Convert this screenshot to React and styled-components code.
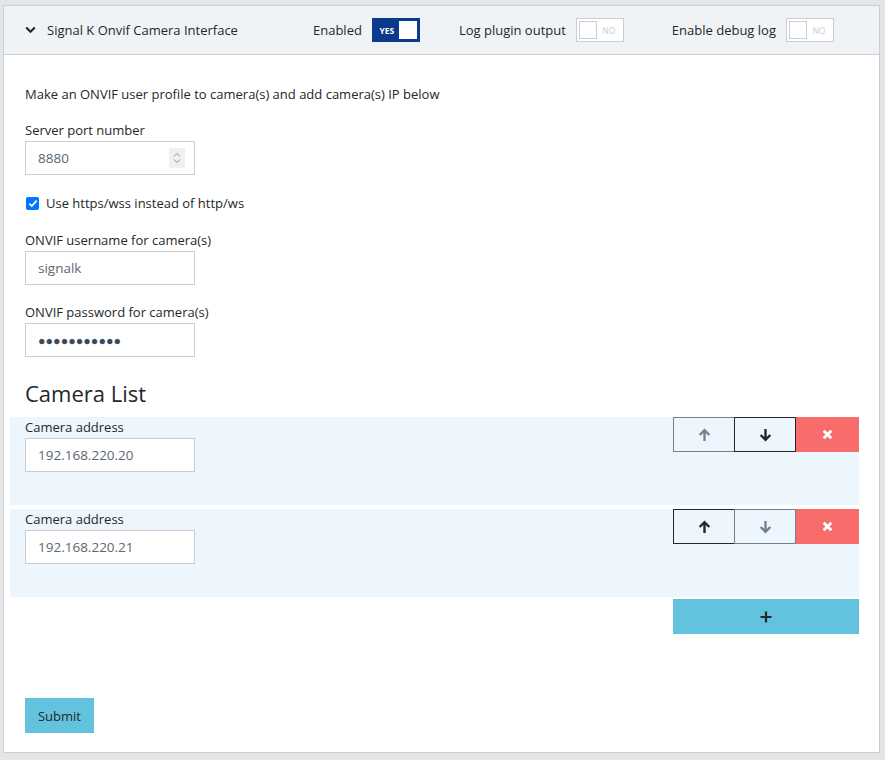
import React from "react";
import styled, { createGlobalStyle } from "styled-components";

const GlobalStyle = createGlobalStyle`
  body {
    margin: 0;
    background: #e4e5e6;
    font-family: "Open Sans", "Noto Sans", sans-serif;
    font-size: 13px;
    color: #23282c;
  }
  * { box-sizing: border-box; }
`;

const Page = styled.div`
  padding: 5px 5px 7px 3px;
`;

const Card = styled.div`
  background: #fff;
  border: 1px solid #c8ced3;
  height: 748px;
  display: flex;
  flex-direction: column;
`;

const Header = styled.div`
  flex-shrink: 0;
  background: #f0f3f5;
  border-bottom: 1px solid #c8ced3;
  height: 49px;
  display: flex;
  align-items: center;
  padding-left: 21px;
  font-size: 13px;
`;

const Title = styled.div`
  display: flex;
  align-items: center;
  gap: 11px;
  width: 288px;
`;

const ToggleGroup = styled.div`
  display: flex;
  align-items: center;
  gap: 10px;
  margin-right: ${(p) => p.$gap}px;
`;

const Switch = styled.div`
  width: 48px;
  height: 24px;
  border: 1px solid ${(p) => (p.$on ? "#0b3a8c" : "#c8ced3")};
  background: ${(p) => (p.$on ? "#0b3a8c" : "#fff")};
  display: flex;
  flex-direction: ${(p) => (p.$on ? "row" : "row-reverse")};
  align-items: center;
  justify-content: space-between;
  padding: 2px;
`;

const SwitchText = styled.span`
  flex: 1;
  text-align: center;
  font-size: 8.5px;
  font-weight: ${(p) => (p.$on ? 700 : 400)};
  color: ${(p) => (p.$on ? "#fff" : "#c8ced3")};
`;

const Knob = styled.span`
  width: 18px;
  height: 18px;
  background: #fff;
  border: 1px solid ${(p) => (p.$on ? "#fff" : "#c8ced3")};
`;

const Body = styled.div`
  padding: 30px 20px 10px 21px;
  display: flex;
  flex-direction: column;
  flex: 1;
  min-height: 0;
`;

const Intro = styled.p`
  margin: 0 0 18px 0;
`;

const Field = styled.div`
  display: flex;
  flex-direction: column;
  gap: 2px;
  margin-bottom: ${(p) => p.$mb ?? 18}px;
`;

const Label = styled.label`
  font-size: 13px;
  line-height: 18px;
`;

const InputBox = styled.div`
  width: 170px;
  height: 34px;
  border: 1px solid #c8ced3;
  background: #fff;
  display: flex;
  align-items: center;
  justify-content: space-between;
  padding: 0 12px;
  color: #5c6873;
  font-size: 13.5px;
`;

const Spinner = styled.span`
  width: 16px;
  height: 20px;
  background: #f0f0f0;
  display: flex;
  align-items: center;
  justify-content: center;
  margin-right: -3px;
`;

const Dots = styled.span`
  color: #3b4a5a;
  font-size: 12.5px;
  letter-spacing: 0;
`;

const CheckRow = styled.label`
  display: flex;
  align-items: center;
  gap: 7px;
  height: 18px;
  margin-top: 19px;
  margin-bottom: 19px;
`;

const Check = styled.span`
  width: 13px;
  height: 13px;
  border-radius: 2px;
  background: #0075ff;
  display: flex;
  align-items: center;
  justify-content: center;
  margin-left: 1px;
`;

const Heading = styled.h3`
  font-size: 22px;
  font-weight: 400;
  margin: 21px 0 9px 0;
  line-height: 30px;
`;

const List = styled.div`
  display: flex;
  flex-direction: column;
  gap: 4px;
  margin: 0 0 0 -15px;
  width: 849px;
`;

const Item = styled.div`
  background: #eef6fd;
  height: 88px;
  display: flex;
  justify-content: space-between;
  padding: 1px 0 0 15px;
`;

const Buttons = styled.div`
  display: flex;
  height: 35px;
  margin-top: -1px;
`;

const MoveButton = styled.button`
  width: 62px;
  height: 35px;
  background: transparent;
  border: 1px solid ${(p) => (p.$active ? "#23282c" : "#73818f")};
  margin-left: -1px;
  display: flex;
  align-items: center;
  justify-content: center;
  padding: 0;
`;

const DeleteButton = styled.button`
  width: 63px;
  height: 35px;
  background: #f86c6b;
  border: none;
  display: flex;
  align-items: center;
  justify-content: center;
  padding: 0;
`;

const AddRow = styled.div`
  display: flex;
  justify-content: flex-end;
  width: 834px;
  margin-top: 2px;
`;

const AddButton = styled.button`
  width: 186px;
  height: 35px;
  background: #63c2de;
  border: none;
  display: flex;
  align-items: center;
  justify-content: center;
`;

const Submit = styled.button`
  margin-top: 64px;
  width: 69px;
  height: 35px;
  background: #63c2de;
  border: none;
  font-family: inherit;
  font-size: 13px;
  color: #23282c;
  padding: 0;
`;

const Arrow = ({ down, color }) => (
  <svg width="13" height="14" viewBox="0 0 12 13" style={{ transform: down ? "rotate(180deg)" : "none" }}>
    <path d="M6 12V2.2M1.5 6.5L6 2l4.5 4.5" fill="none" stroke={color} strokeWidth="2.2" />
  </svg>
);

const Cross = () => (
  <svg width="11" height="11" viewBox="0 0 10 10">
    <path d="M1.5 1.5l7 7M8.5 1.5l-7 7" stroke="#fff" strokeWidth="2.6" />
  </svg>
);

const Toggle = ({ label, on, gap }) => (
  <ToggleGroup $gap={gap}>
    <span>{label}</span>
    <Switch $on={on}>
      <SwitchText $on={on}>{on ? "YES" : "NO"}</SwitchText>
      <Knob $on={on} />
    </Switch>
  </ToggleGroup>
);

const cameras = ["192.168.220.20", "192.168.220.21"];

const App = () => (
  <Page>
    <GlobalStyle />
    <Card>
      <Header>
        <Title>
          <svg width="11" height="8" viewBox="0 0 11 8">
            <path d="M1.2 1.5L5.5 5.8 9.8 1.5" fill="none" stroke="#23282c" strokeWidth="2.2" />
          </svg>
          Signal K Onvif Camera Interface
        </Title>
        <Toggle label="Enabled" on gap={39} />
        <Toggle label="Log plugin output" gap={48} />
        <Toggle label="Enable debug log" />
      </Header>
      <Body>
        <Intro>Make an ONVIF user profile to camera(s) and add camera(s) IP below</Intro>
        <Field $mb={0}>
          <Label>Server port number</Label>
          <InputBox>
            8880
            <Spinner>
              <svg width="8" height="12" viewBox="0 0 8 12">
                <path d="M1 4.5L4 1.5 7 4.5M1 7.5L4 10.5 7 7.5" fill="none" stroke="#8a8f94" strokeWidth="1" />
              </svg>
            </Spinner>
          </InputBox>
        </Field>
        <CheckRow>
          <Check>
            <svg width="10" height="9" viewBox="0 0 10 9">
              <path d="M1.3 4.6L3.8 7 8.7 1.6" fill="none" stroke="#fff" strokeWidth="1.8" />
            </svg>
          </Check>
          Use https/wss instead of http/ws
        </CheckRow>
        <Field>
          <Label>ONVIF username for camera(s)</Label>
          <InputBox>signalk</InputBox>
        </Field>
        <Field $mb={0}>
          <Label>ONVIF password for camera(s)</Label>
          <InputBox>
            <Dots>●●●●●●●●●●●</Dots>
          </InputBox>
        </Field>
        <Heading>Camera List</Heading>
        <List>
          {cameras.map((ip, i) => (
            <Item key={ip}>
              <Field $mb={0}>
                <Label>Camera address</Label>
                <InputBox>{ip}</InputBox>
              </Field>
              <Buttons>
                <MoveButton $active={i > 0}>
                  <Arrow color={i > 0 ? "#23282c" : "#73818f"} />
                </MoveButton>
                <MoveButton $active={i < cameras.length - 1}>
                  <Arrow down color={i < cameras.length - 1 ? "#23282c" : "#73818f"} />
                </MoveButton>
                <DeleteButton>
                  <Cross />
                </DeleteButton>
              </Buttons>
            </Item>
          ))}
        </List>
        <AddRow>
          <AddButton>
            <svg width="12" height="12" viewBox="0 0 12 12">
              <path d="M6 0.5v11M0.5 6h11" stroke="#23282c" strokeWidth="2.2" />
            </svg>
          </AddButton>
        </AddRow>
        <Submit>Submit</Submit>
      </Body>
    </Card>
  </Page>
);

export default App;
